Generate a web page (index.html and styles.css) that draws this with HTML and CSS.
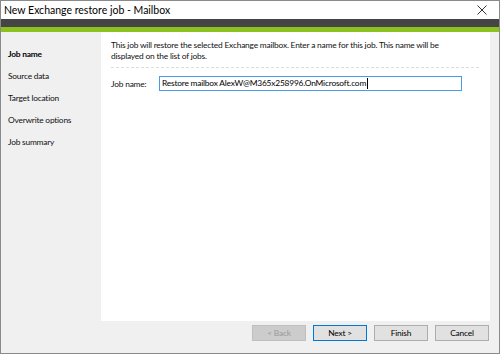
FILE: index.html
```html
<!DOCTYPE html>
<html>
<head>
<meta charset="utf-8">
<link rel="stylesheet" href="styles.css">
</head>
<body>
<div class="window">
  <div class="titlebar">
    <span class="title">New Exchange restore job - Mailbox</span>
    <svg class="close" width="10" height="10" viewBox="0 0 10 10"><path d="M0.5 0.5 L9.5 9.5 M9.5 0.5 L0.5 9.5" stroke="#333" stroke-width="1" fill="none"/></svg>
  </div>
  <div class="darkbar"></div>
  <div class="greenbar"></div>
  <div class="main">
    <ul class="steps">
      <li class="active">Job name</li>
      <li>Source data</li>
      <li>Target location</li>
      <li>Overwrite options</li>
      <li>Job summary</li>
    </ul>
    <div class="panel">
      <p class="intro">This job will restore the selected Exchange mailbox. Enter a name for this job. This name will be displayed on the list of jobs.</p>
      <div class="sep"></div>
      <div class="field">
        <label class="label">Job name:</label>
        <div class="input"><span>Restore mailbox AlexW@M365x258996.OnMicrosoft.com</span><span class="caret"></span></div>
      </div>
    </div>
  </div>
  <div class="footer">
    <button class="btn disabled">&lt; Back</button>
    <button class="btn default">Next &gt;</button>
    <button class="btn">Finish</button>
    <button class="btn">Cancel</button>
  </div>
</div>
</body>
</html>
```
FILE: styles.css
```css
* { box-sizing: border-box; }
html, body { margin: 0; padding: 0; background: #fff; }
body { font-family: "Lato", "Open Sans", sans-serif; color: #000; }
.window {
  width: 500px; height: 354px;
  border: 1px solid #8a8a8a;
  display: flex; flex-direction: column;
  background: #f0f0f0;
}
.titlebar {
  height: 18px; background: #fff;
  display: flex; align-items: center; justify-content: space-between;
  padding: 0 12px 0 3px;
}
.title { font-size: 10.5px; color: #000; }
.close { display: block; }
.darkbar { height: 8px; background: #454545; }
.greenbar { height: 5px; background: #8cc11f; }
.main { height: 289px; display: flex; }
.steps { list-style: none; margin: 0; padding: 16px 0 0 7px; width: 100px; flex: none; }
.steps li { font-size: 8.4px; letter-spacing: -0.22px; height: 22px; line-height: 12px; color: #111; }
.steps li.active { font-weight: bold; color: #000; }
.panel { flex: 1; background: #fff; margin-right: 9px; padding: 8px 11px 0 10px; }
.intro { margin: 0; font-size: 8.4px; letter-spacing: -0.2px; line-height: 11px; color: #111; width: 350px; }
.sep { border-top: 1px dashed #dcdcdc; margin: 5px 0 0 0; }
.field { display: flex; align-items: center; margin-top: 8px; }
.label { font-size: 8.4px; letter-spacing: -0.2px; width: 48px; color: #111; }
.input {
  width: 303px; height: 15px;
  border: 1px solid #4a9be3;
  font-size: 8.4px; letter-spacing: -0.2px; line-height: 13px; padding-left: 2px; color: #000;
  display: flex; align-items: center;
}
.caret { display: inline-block; width: 1px; height: 11px; background: #000; margin-left: 1px; }
.footer {
  flex: 1; display: flex; justify-content: flex-end; align-items: flex-start;
  gap: 7px; padding: 4px 10px 0 0;
}
.btn {
  width: 54px; height: 16px; padding: 0;
  font-family: "Lato", "Open Sans", sans-serif; font-size: 8.4px; letter-spacing: -0.2px; color: #000;
  background: #e1e1e1; border: 1px solid #adadad;
}
.btn.disabled { background: #cccccc; border-color: #bfbfbf; color: #9a9a9a; }
.btn.default { border-color: #0078d7; }
```
